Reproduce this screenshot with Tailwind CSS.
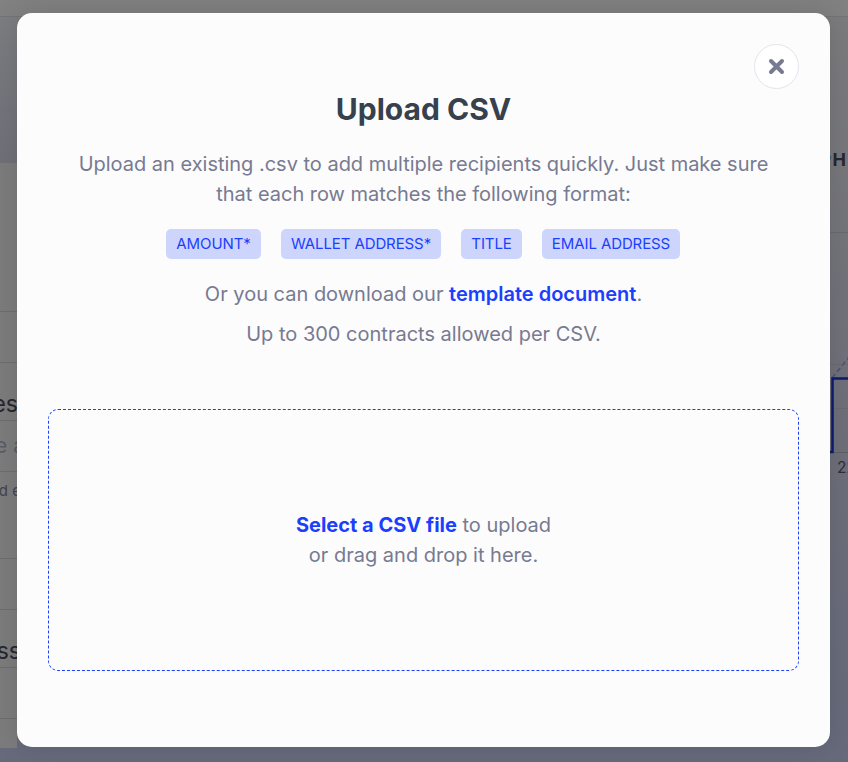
<!DOCTYPE html>
<html lang="en">
<head>
<meta charset="utf-8">
<title>Upload CSV</title>
<script src="https://cdn.jsdelivr.net/npm/@tailwindcss/browser@4"></script>
</head>
<body class="relative h-[762px] w-[848px] overflow-hidden bg-[#666977] font-['Inter',sans-serif]">
  <!-- Dimmed page behind the dialog -->
  <div class="flex h-[762px] flex-col bg-linear-to-b from-[#7c7c7e] via-[#6f7079] to-[#666a7b]" aria-hidden="true">
    <div class="h-[17px] shrink-0 border-b border-[#747474] bg-[#818181]"></div>
    <div class="flex flex-1 justify-between">
      <div class="flex w-[17px] flex-col overflow-hidden whitespace-nowrap">
        <div class="h-[145px] bg-linear-to-b from-[#7c7d80] to-[#6f7079]"></div>
        <div class="h-[586px] border-t border-[#717171] bg-[#7c7c7c]">
          <div class="mt-[148px] h-[52px] border-y border-[#6d6d6d]"></div>
          <div class="flex h-[57px] items-end justify-end pb-[3px] text-[23px] leading-[26px] text-[#25282f]"><span class="-mr-[1px]">es</span></div>
          <div class="flex h-[52px] items-center justify-end border-y border-[#6d6d6d] text-[21px] text-[#5a5c68]"><span class="-mr-[8px]">e a</span></div>
          <div class="flex h-[86px] justify-end pt-[9px] text-[15px] leading-[20px] text-[#41444f]"><span class="-mr-[4px]">d e</span></div>
          <div class="h-[52px] border-y border-[#6d6d6d]"></div>
          <div class="flex h-[57px] items-end justify-end pb-[3px] text-[23px] leading-[26px] text-[#25282f]"><span class="-mr-[4px]">ss</span></div>
          <div class="h-[52px] border-y border-[#6d6d6d]"></div>
        </div>
      </div>
      <svg class="h-[745px] w-[28px]" viewBox="820 17 28 745" fill="none">
        <path d="M820 232.500H848M820 364.500H848M820 408.500H848" stroke="#696a70"/>
        <path d="M820 452.500H848" stroke="#5d5d62"/>
        <path d="M832 378L850 356" stroke="#4b5370" stroke-width="1.500" stroke-dasharray="5 3"/>
        <path d="M820 452H832.500V378.500H848" stroke="#0b1b72" stroke-width="2.500"/>
        <text x="819.500" y="166" font-size="18" font-weight="700" fill="#22324c">P</text>
        <text x="832.500" y="166" font-size="18" font-weight="700" fill="#25272d">H</text>
        <text x="837" y="473" font-size="15.500" fill="#2d2f35">22</text>
      </svg>
    </div>
  </div>

  <!-- Dialog -->
  <main role="dialog" aria-label="Upload CSV" class="absolute top-[13px] left-[17px] flex h-[734px] w-[813px] flex-col rounded-[15px] bg-[#fcfcfc] px-[31px] pt-[31px] text-center text-[20px] leading-[30px] text-[#777a91] shadow-[0_0_28px_rgba(0,0,0,0.12)]">
    <button aria-label="Close" class="flex size-[45px] shrink-0 items-center justify-center self-end rounded-full border border-[#e4e4ee] bg-white">
      <svg class="size-[17px]" viewBox="0 0 17 17" fill="none" stroke="#777a91" stroke-width="4" stroke-linecap="round"><path d="M3 3L14 14M14 3L3 14"/></svg>
    </button>
    <h1 class="mt-[2px] text-[30px] leading-[36px] font-bold text-[#37404d]">Upload CSV</h1>
    <p class="mt-[22px] tracking-[-0.015px]">Upload an existing .csv to add multiple recipients quickly. Just make sure<br>that each row matches the following format:</p>
    <div class="mt-5 mr-px flex justify-center gap-5 text-[15px] tracking-[-0.1px] whitespace-nowrap text-[#1c3ffd]">
      <span class="h-[30px] w-[95px] rounded-[5px] bg-[#cdd5fc]">AMOUNT*</span>
      <span class="h-[30px] w-[160px] rounded-[5px] bg-[#cdd5fc]">WALLET ADDRESS*</span>
      <span class="h-[30px] w-[61px] rounded-[5px] bg-[#cdd5fc]">TITLE</span>
      <span class="h-[30px] w-[138px] rounded-[5px] bg-[#cdd5fc]">EMAIL ADDRESS</span>
    </div>
    <p class="mt-5">Or you can download our <a class="font-semibold text-[#1c3ffd]">template document</a>.</p>
    <p class="mt-[10px]">Up to 300 contracts allowed per CSV.</p>
    <div class="mt-[60px] flex h-[262px] items-center justify-center rounded-[10px] border border-dashed border-[#1c3ffd]">
      <p><a class="font-bold text-[#1c3ffd]">Select a CSV file</a> to upload<br>or drag and drop it here.</p>
    </div>
  </main>
</body>
</html>
